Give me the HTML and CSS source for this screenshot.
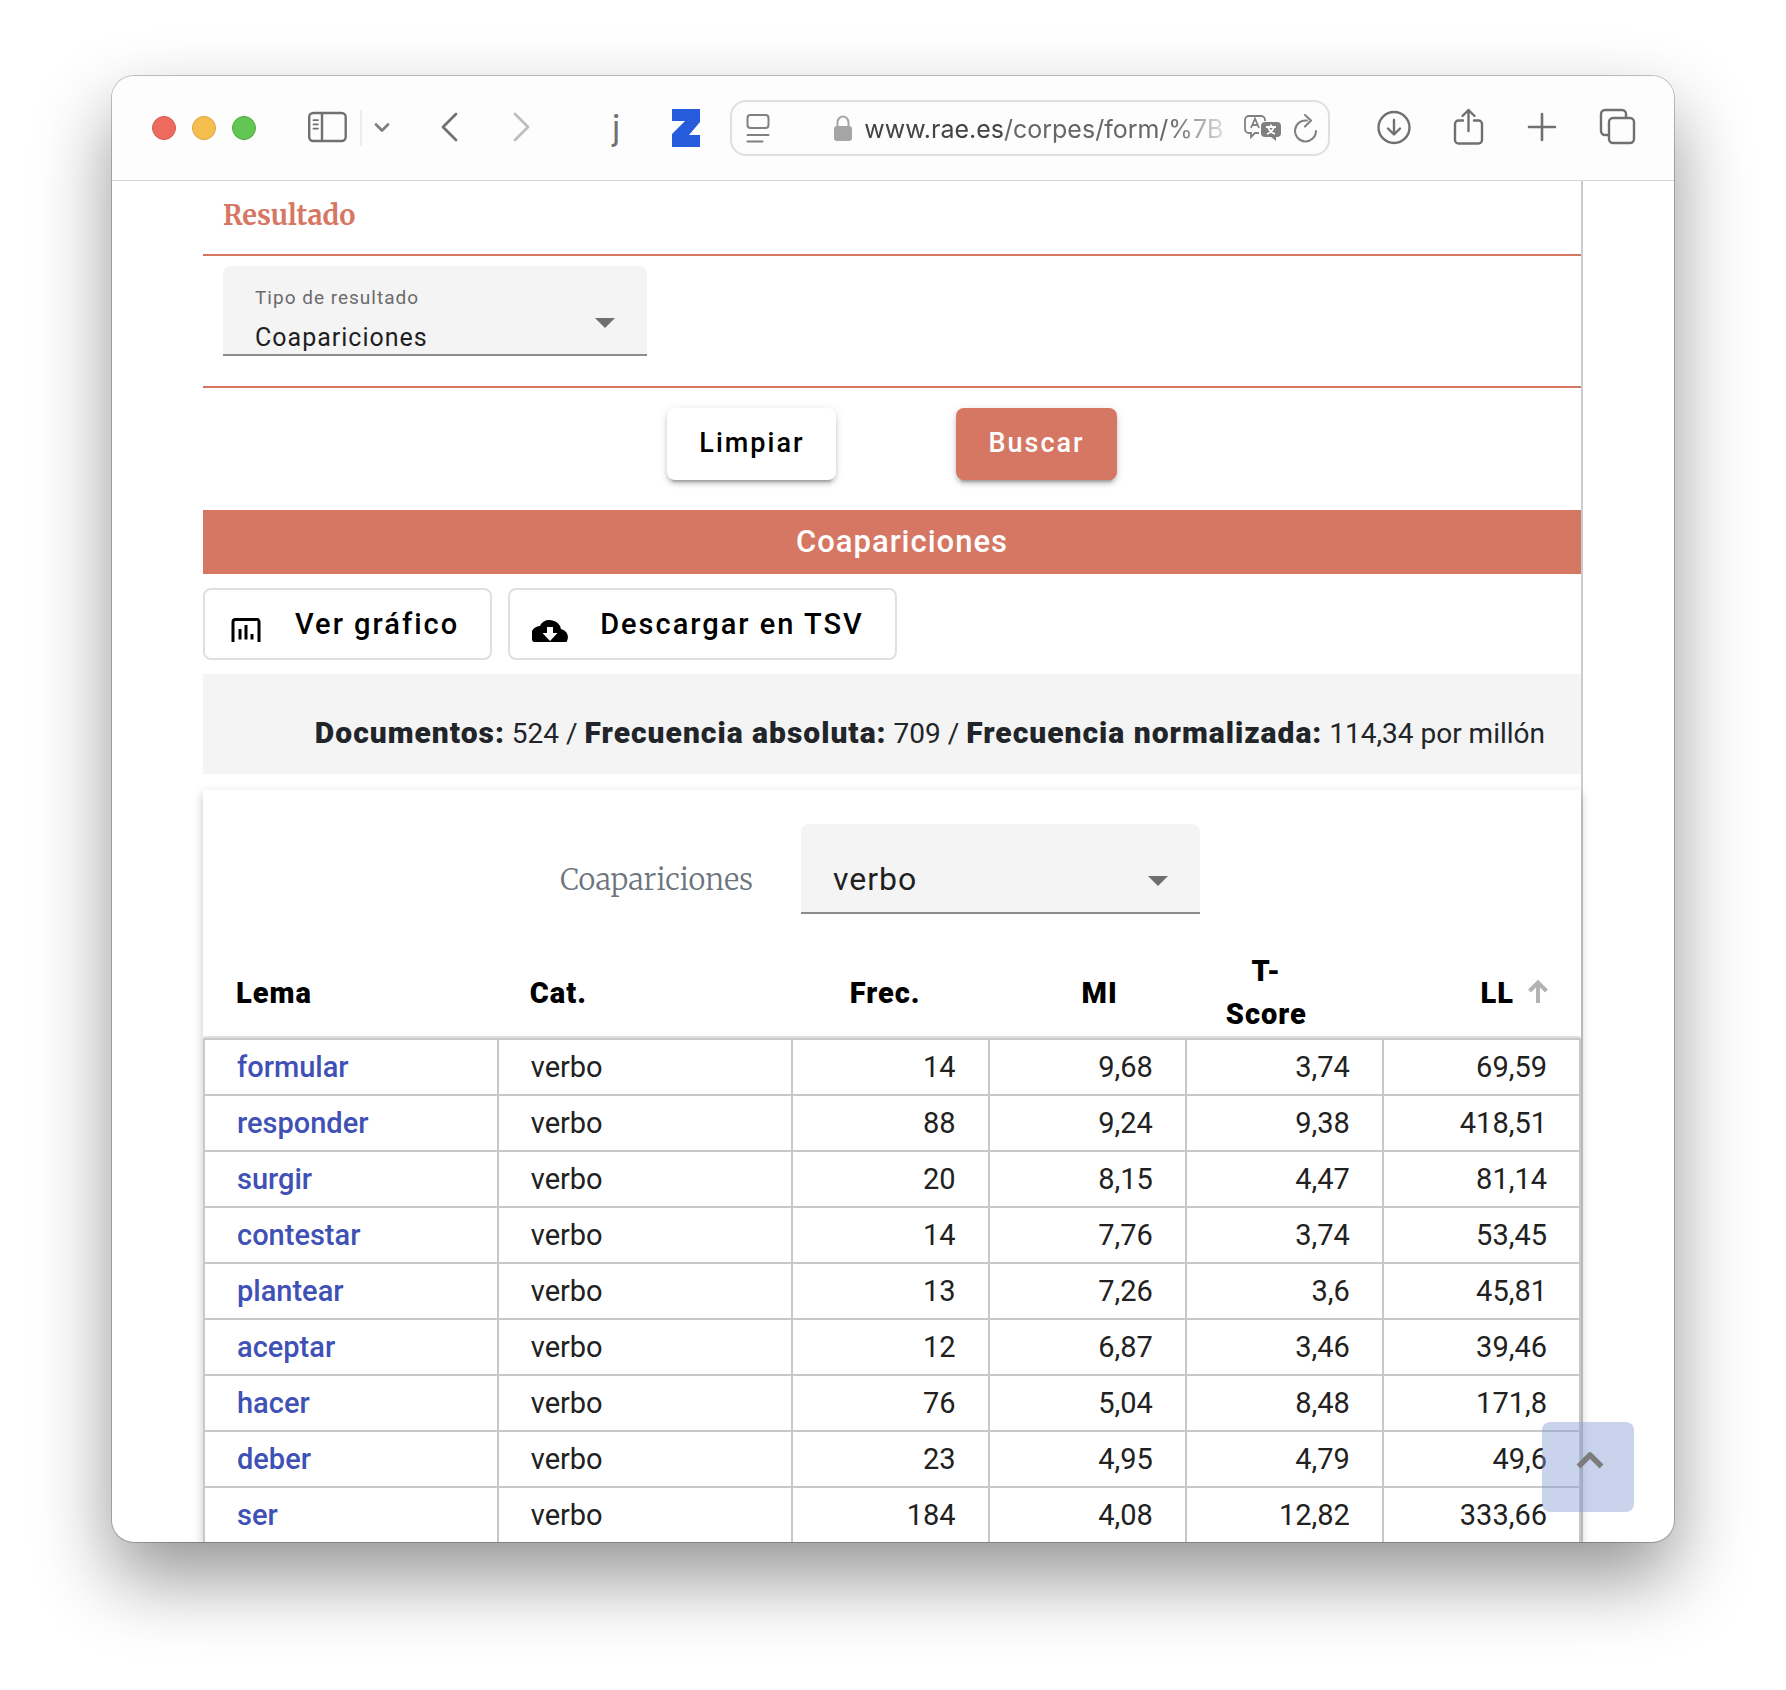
FILE: index.html
```html
<!DOCTYPE html>
<html lang="es">
<head>
<meta charset="utf-8">
<title>CORPES - Coapariciones</title>
<link rel="stylesheet" href="styles.css">
</head>
<body>
<div class="window">
  <header class="toolbar">
    <div class="lights"><span class="light red"></span><span class="light yellow"></span><span class="light green"></span></div>
    <div class="side-tools">
      <button class="tool" aria-label="Barra lateral"><svg width="40" height="40" viewBox="0 0 40 40" fill="none" stroke="#707070" stroke-width="2.4"><rect x="1.2" y="5" width="36.500" height="28" rx="4"/><path d="M14 5v28"/><path d="M5.500 12.2h4.4M5.500 16.4h4.4M5.500 20.6h4.4" stroke-width="1.8" stroke-linecap="round"/></svg></button>
      <span class="divider"></span>
      <button class="tool" aria-label="Grupos"><svg width="16" height="12" viewBox="0 0 16 12" fill="none" stroke="#808080" stroke-width="2.8" stroke-linecap="round" stroke-linejoin="round"><path d="M2 2.5l6 6 6-6"/></svg></button>
    </div>
    <nav class="history">
      <button class="tool" aria-label="Atrás"><svg width="20" height="32" viewBox="0 0 20 32" fill="none" stroke="#707070" stroke-width="2.8" stroke-linecap="round" stroke-linejoin="round"><path d="M16 2L3 15l13 13"/></svg></button>
      <button class="tool" aria-label="Adelante"><svg width="20" height="32" viewBox="0 0 20 32" fill="none" stroke="#bdbdbd" stroke-width="2.8" stroke-linecap="round" stroke-linejoin="round"><path d="M3 2l13 13L3 28"/></svg></button>
    </nav>
    <div class="extensions">
      <button class="tool ext-j">j</button>
      <button class="tool" aria-label="Zotero"><svg width="28" height="38" viewBox="0 0 28 38" fill="#265cdc"><path d="M0 0h28v13L17 26h11v12H0V25l13-13H0z"/></svg></button>
    </div>
    <div class="address">
      <svg width="24" height="30" viewBox="0 0 24 30" fill="none" stroke="#808080" stroke-width="2"><rect x="1.5" y="2" width="21" height="13" rx="3"/><path d="M1.5 22h21M1.5 28.5h15" stroke-linecap="round"/></svg>
      <svg class="lock" width="18" height="26" viewBox="0 0 18 26"><path d="M3.5 12V7.5a5.5 6 0 0 1 11 0V12" fill="none" stroke="#a5a5a5" stroke-width="2"/><rect y="11" width="18" height="15" rx="3" fill="#a5a5a5"/></svg>
      <span class="url"><span class="host">www.rae.es</span>/corpes/form/%7B</span>
      <svg width="38" height="26" viewBox="0 0 38 26"><path d="M15 18h-4l-4 4v-4H5a4 4 0 0 1-4-4V5a4 4 0 0 1 4-4h12a4 4 0 0 1 4 4v1" fill="none" stroke="#808080" stroke-width="1.8"/><path d="M7 13l4-9.500 4 9.500M8.400 10h5.200" fill="none" stroke="#808080" stroke-width="1.800"/><path d="M21 7h12a4 4 0 0 1 4 4v7a4 4 0 0 1-4 4h-1v4l-5-4h-6a4 4 0 0 1-4-4v-7a4 4 0 0 1 4-4z" fill="#808080"/><path d="M22 12h10M27 9.500V12M24 12q1.500 5 7 7M30 12q-1.500 5-7 7" fill="none" stroke="#fff" stroke-width="1.800"/></svg>
      <button class="tool" aria-label="Recargar"><svg width="24" height="30" viewBox="0 0 24 30" fill="none" stroke="#808080" stroke-width="2" stroke-linecap="round" stroke-linejoin="round"><path d="M13 7.500A10.500 10.500 0 1 0 22 18M11 2l6 5.500-6 6"/></svg></button>
    </div>
    <div class="actions">
      <button class="tool" aria-label="Descargas"><svg width="40" height="40" viewBox="0 0 40 40" fill="none" stroke="#707070" stroke-width="2.400" stroke-linecap="round" stroke-linejoin="round"><circle cx="20" cy="19.500" r="15.500"/><path d="M20 12v14M14 20.500l6 6 6-6"/></svg></button>
      <button class="tool" aria-label="Compartir"><svg width="40" height="40" viewBox="0 0 40 40" fill="none" stroke="#707070" stroke-width="2.400" stroke-linecap="round" stroke-linejoin="round"><path d="M15 12.500h-4.500a3.500 3.500 0 0 0-3.500 3.500v16a3.500 3.500 0 0 0 3.500 3.500h20a3.500 3.500 0 0 0 3.500-3.500V16a3.500 3.500 0 0 0-3.500-3.500H26M20.500 23V2M14.500 8l6-6 6 6"/></svg></button>
      <button class="tool" aria-label="Nueva pestaña"><svg width="40" height="40" viewBox="0 0 40 40" fill="none" stroke="#707070" stroke-width="2.600" stroke-linecap="round"><path d="M20 6v26M7 19h26"/></svg></button>
      <button class="tool" aria-label="Pestañas"><svg width="40" height="40" viewBox="0 0 40 40" fill="none" stroke="#707070" stroke-width="2.400"><rect x="13" y="10" width="25" height="25" rx="4"/><path d="M13 27H9a4 4 0 0 1-4-4V6a4 4 0 0 1 4-4h17a4 4 0 0 1 4 4v4"/></svg></button>
    </div>
  </header>

  <div class="page">
    <main class="content">
      <h2 class="section-title">Resultado</h2>
      <section class="result-type">
        <div class="field type-field">
          <label for="tipo">Tipo de resultado</label>
          <select id="tipo"><option>Coapariciones</option></select>
          <svg class="caret" width="20" height="10" viewBox="0 0 20 10"><path d="M0 0h20L10 10z" fill="#6f6f6f"/></svg>
        </div>
      </section>
      <div class="form-actions">
        <button class="btn btn-clear">Limpiar</button>
        <button class="btn btn-search">Buscar</button>
      </div>
      <h3 class="band">Coapariciones</h3>
      <div class="exports">
        <button class="btn-outline"><svg width="36" height="24" viewBox="0 0 36 24"><path d="M6 24V4a2.500 2.500 0 0 1 2.500-2.500h20A2.500 2.500 0 0 1 32 4v20" fill="none" stroke="#000" stroke-width="3"/><path d="M13 11v10.500M19 7v14.500M25 16v5.500" stroke="#000" stroke-width="3"/></svg>Ver gráfico</button>
        <button class="btn-outline"><svg width="36" height="24" viewBox="0 0 36 24"><path d="M29 11A11.500 11.500 0 0 0 7.800 8 9.500 9.500 0 0 0 1.500 24h33A8.500 8.500 0 0 0 29 11zM18 23l-7.500-8H15V9h6v6h4.500z"/></svg>Descargar en TSV</button>
      </div>
      <p class="summary"><b>Documentos:</b> 524 / <b>Frecuencia absoluta:</b> 709 / <b>Frecuencia normalizada:</b> 114,34 por millón</p>
      <section class="card">
        <div class="filter">
          <label class="filter-label" for="categoria">Coapariciones</label>
          <div class="field filter-field">
            <select id="categoria"><option>verbo</option></select>
            <svg class="caret" width="20" height="10" viewBox="0 0 20 10"><path d="M0 0h20L10 10z" fill="#6f6f6f"/></svg>
          </div>
        </div>
        <table class="results">
          <colgroup><col class="wide"><col class="wide"><col><col><col><col></colgroup>
          <thead>
            <tr><th>Lema</th><th>Cat.</th><th class="num sortable">Frec.</th><th class="num sortable">MI</th><th class="sortable score">T-<br>Score</th><th class="num"><span class="sorted">LL<svg width="20" height="24" viewBox="0 0 20 24" fill="none" stroke="#b3b3b3" stroke-width="4"><path d="M10 24V4M1.500 12L10 3.500l8.500 8.500"/></svg></span></th></tr>
          </thead>
          <tbody>
            <tr><td><a href="#formular">formular</a></td><td>verbo</td><td class="num">14</td><td class="num">9,68</td><td class="num">3,74</td><td class="num">69,59</td></tr>
            <tr><td><a href="#responder">responder</a></td><td>verbo</td><td class="num">88</td><td class="num">9,24</td><td class="num">9,38</td><td class="num">418,51</td></tr>
            <tr><td><a href="#surgir">surgir</a></td><td>verbo</td><td class="num">20</td><td class="num">8,15</td><td class="num">4,47</td><td class="num">81,14</td></tr>
            <tr><td><a href="#contestar">contestar</a></td><td>verbo</td><td class="num">14</td><td class="num">7,76</td><td class="num">3,74</td><td class="num">53,45</td></tr>
            <tr><td><a href="#plantear">plantear</a></td><td>verbo</td><td class="num">13</td><td class="num">7,26</td><td class="num">3,6</td><td class="num">45,81</td></tr>
            <tr><td><a href="#aceptar">aceptar</a></td><td>verbo</td><td class="num">12</td><td class="num">6,87</td><td class="num">3,46</td><td class="num">39,46</td></tr>
            <tr><td><a href="#hacer">hacer</a></td><td>verbo</td><td class="num">76</td><td class="num">5,04</td><td class="num">8,48</td><td class="num">171,8</td></tr>
            <tr><td><a href="#deber">deber</a></td><td>verbo</td><td class="num">23</td><td class="num">4,95</td><td class="num">4,79</td><td class="num">49,6</td></tr>
            <tr><td><a href="#ser">ser</a></td><td>verbo</td><td class="num">184</td><td class="num">4,08</td><td class="num">12,82</td><td class="num">333,66</td></tr>
          </tbody>
        </table>
      </section>
    </main>
    <button class="to-top" aria-label="Subir"><svg width="28" height="18" viewBox="0 0 28 18" fill="none" stroke="#7c7c7c" stroke-width="5.500" stroke-linejoin="round"><path d="M2.500 15.500L14 4l11.500 11.500"/></svg></button>
  </div>
</div>
</body>
</html>
```
FILE: styles.css
```css
* { box-sizing: border-box; }

body {
  margin: 0;
  padding: 76px 112px 148px;
  background: #fff;
  font-family: Roboto, "Liberation Sans", sans-serif;
  color: #212121;
}

button { font: inherit; cursor: pointer; }

.window {
  overflow: hidden;
  border-radius: 22px;
  background: #fff;
  box-shadow: 0 0 0 1px rgba(0, 0, 0, .22), 0 36px 76px rgba(0, 0, 0, .42);
}

/* Browser toolbar */
.toolbar {
  display: flex;
  align-items: center;
  height: 105px;
  padding: 0 38px 0 40px;
  border-bottom: 1px solid #d6d6d6;
  background: #fdfdfd;
}

.lights { display: flex; gap: 16px; }
.light { width: 24px; height: 24px; border-radius: 50%; border: 1px solid; }
.red { background: #ed6a5e; border-color: #d5584c; }
.yellow { background: #f5bf4f; border-color: #d9a33c; }
.green { background: #62c655; border-color: #4fa73c; }

.tool {
  display: flex;
  padding: 0;
  border: 0;
  background: none;
  color: #707070;
}

.side-tools { display: flex; align-items: center; gap: 12px; margin-left: 52px; }
.divider { width: 2px; height: 36px; background: #ececec; }
.history { display: flex; gap: 52px; margin-left: 50px; }
.extensions { display: flex; align-items: center; gap: 52px; margin-left: 80px; }
.ext-j { font-family: Inter, sans-serif; font-size: 34px; line-height: 40px; }

.address {
  flex: 1;
  display: flex;
  align-items: center;
  height: 56px;
  margin: 0 44px 0 30px;
  padding: 0 10px 0 14px;
  border: 2px solid #dfdfdf;
  border-radius: 16px;
}
.lock { margin-left: 64px; }
.url {
  flex: 1;
  width: 0;
  margin: 0 16px 0 12px;
  padding-top: 2px;
  white-space: nowrap;
  font-family: Inter, sans-serif;
  font-size: 25px;
  line-height: 32px;
  color: #666;
  -webkit-mask-image: linear-gradient(to right, #000 84%, rgba(0, 0, 0, .15));
  mask-image: linear-gradient(to right, #000 84%, rgba(0, 0, 0, .15));
}
.host { color: #444; }
.address .tool { margin-left: 12px; }
.actions { display: flex; gap: 34px; }

/* Page */
.page { position: relative; padding: 0 91px; }
.content { border-right: 2px solid #ccc; }

.section-title {
  margin: 0;
  padding: 14px 20px 19px;
  border-bottom: 2px solid #d67763;
  font: bold 27px/40px Merriweather, "Liberation Serif", serif;
  color: #d67763;
}

.result-type { padding: 10px 20px 30px; border-bottom: 2px solid #d67763; }

.field {
  display: grid;
  grid-template-columns: 1fr 20px 32px;
  height: 90px;
  border-bottom: 2px solid #8c8c8c;
  border-radius: 8px 8px 0 0;
  background: #f4f4f4;
}
.field label {
  grid-area: 1 / 1;
  padding: 20px 0 0 32px;
  font-size: 19px;
  line-height: 24px;
  letter-spacing: 1px;
  color: #6b6b6b;
}
.field select {
  grid-area: 2 / 1 / 3 / 4;
  appearance: none;
  border: 0;
  background: none;
  font-family: inherit;
  letter-spacing: 1px;
  color: #1f1f1f;
}
.caret {
  grid-area: 1 / 2 / 3 / 3;
  align-self: center;
  margin-top: 26px;
  pointer-events: none;
}
.type-field { width: 424px; }
.type-field select { padding: 8px 0 0 32px; font-size: 25px; }
.filter-field { width: 399px; }
.filter-field select { grid-row: 1 / 3; padding: 22px 0 0 32px; font-size: 32px; }

.form-actions { display: flex; justify-content: center; gap: 120px; padding: 20px 0 30px; }
.btn {
  height: 72px;
  padding: 0 32px 2px;
  border: 0;
  border-radius: 8px;
  font-size: 27px;
  font-weight: 500;
  letter-spacing: 2px;
  box-shadow: 0 6px 2px -4px rgba(0, 0, 0, .2), 0 4px 4px rgba(0, 0, 0, .14), 0 2px 10px rgba(0, 0, 0, .12);
}
.btn-clear { background: #fff; color: #000; }
.btn-search { background: #d67763; color: #fff; }

.band {
  margin: 0;
  padding-left: 20px;
  background: #d67763;
  color: #fff;
  font-size: 31px;
  font-weight: 500;
  line-height: 64px;
  letter-spacing: 1px;
  text-align: center;
}

.exports { display: flex; gap: 16px; padding: 14px 0; }
.btn-outline {
  display: flex;
  align-items: center;
  gap: 32px;
  height: 72px;
  padding: 0 31px 0 22px;
  border: 2px solid #e0e0e0;
  border-radius: 8px;
  background: #fff;
  color: #000;
  font-size: 29px;
  font-weight: 500;
  letter-spacing: 2px;
}
.btn-outline svg { margin-top: 12px; }

.summary {
  margin: 0 0 16px;
  padding: 40px 36px 20px 0;
  background: #f4f4f4;
  color: #212529;
  font-size: 28px;
  line-height: 40px;
  text-align: right;
}
.summary b { font-size: 30px; line-height: 1; font-weight: 900; letter-spacing: 1px; }

.card { box-shadow: 0 4px 10px rgba(0, 0, 0, .22); background: #fff; }
.filter {
  display: flex;
  justify-content: center;
  align-items: flex-start;
  gap: 48px;
  padding: 34px 24px 36px 0;
}
.filter-label {
  padding-top: 36px;
  font: 300 29px/40px Merriweather, "Liberation Serif", serif;
  color: #6c757d;
}

.results {
  width: 100%;
  table-layout: fixed;
  border-collapse: collapse;
  font-size: 29px;
}
.wide { width: 21.35%; }
.results th {
  height: 88px;
  padding: 0 32px 2px;
  box-shadow: inset 0 -2px #e0e0e0;
  color: #000;
  font-weight: 900;
  line-height: 43px;
  letter-spacing: 1px;
  text-align: left;
}
.results td {
  height: 56px;
  padding: 0 32px;
  border: 2px solid #c8c8c8;
}
.results tbody tr:last-child td { height: 55px; border-bottom: 0; }
.results a { color: #3f51b5; font-weight: 500; text-decoration: none; }
.results .num { text-align: right; }
.results .sortable { padding-right: 68px; }
.results .score { text-align: center; }
.sorted { display: inline-flex; align-items: center; gap: 14px; }
.sorted svg { margin-bottom: 4px; }

.to-top {
  position: absolute;
  right: 40px;
  bottom: 30px;
  width: 92px;
  height: 90px;
  padding: 0 0 10px 4px;
  border: 0;
  border-radius: 8px;
  background: rgba(132, 155, 210, .44);
}
```
